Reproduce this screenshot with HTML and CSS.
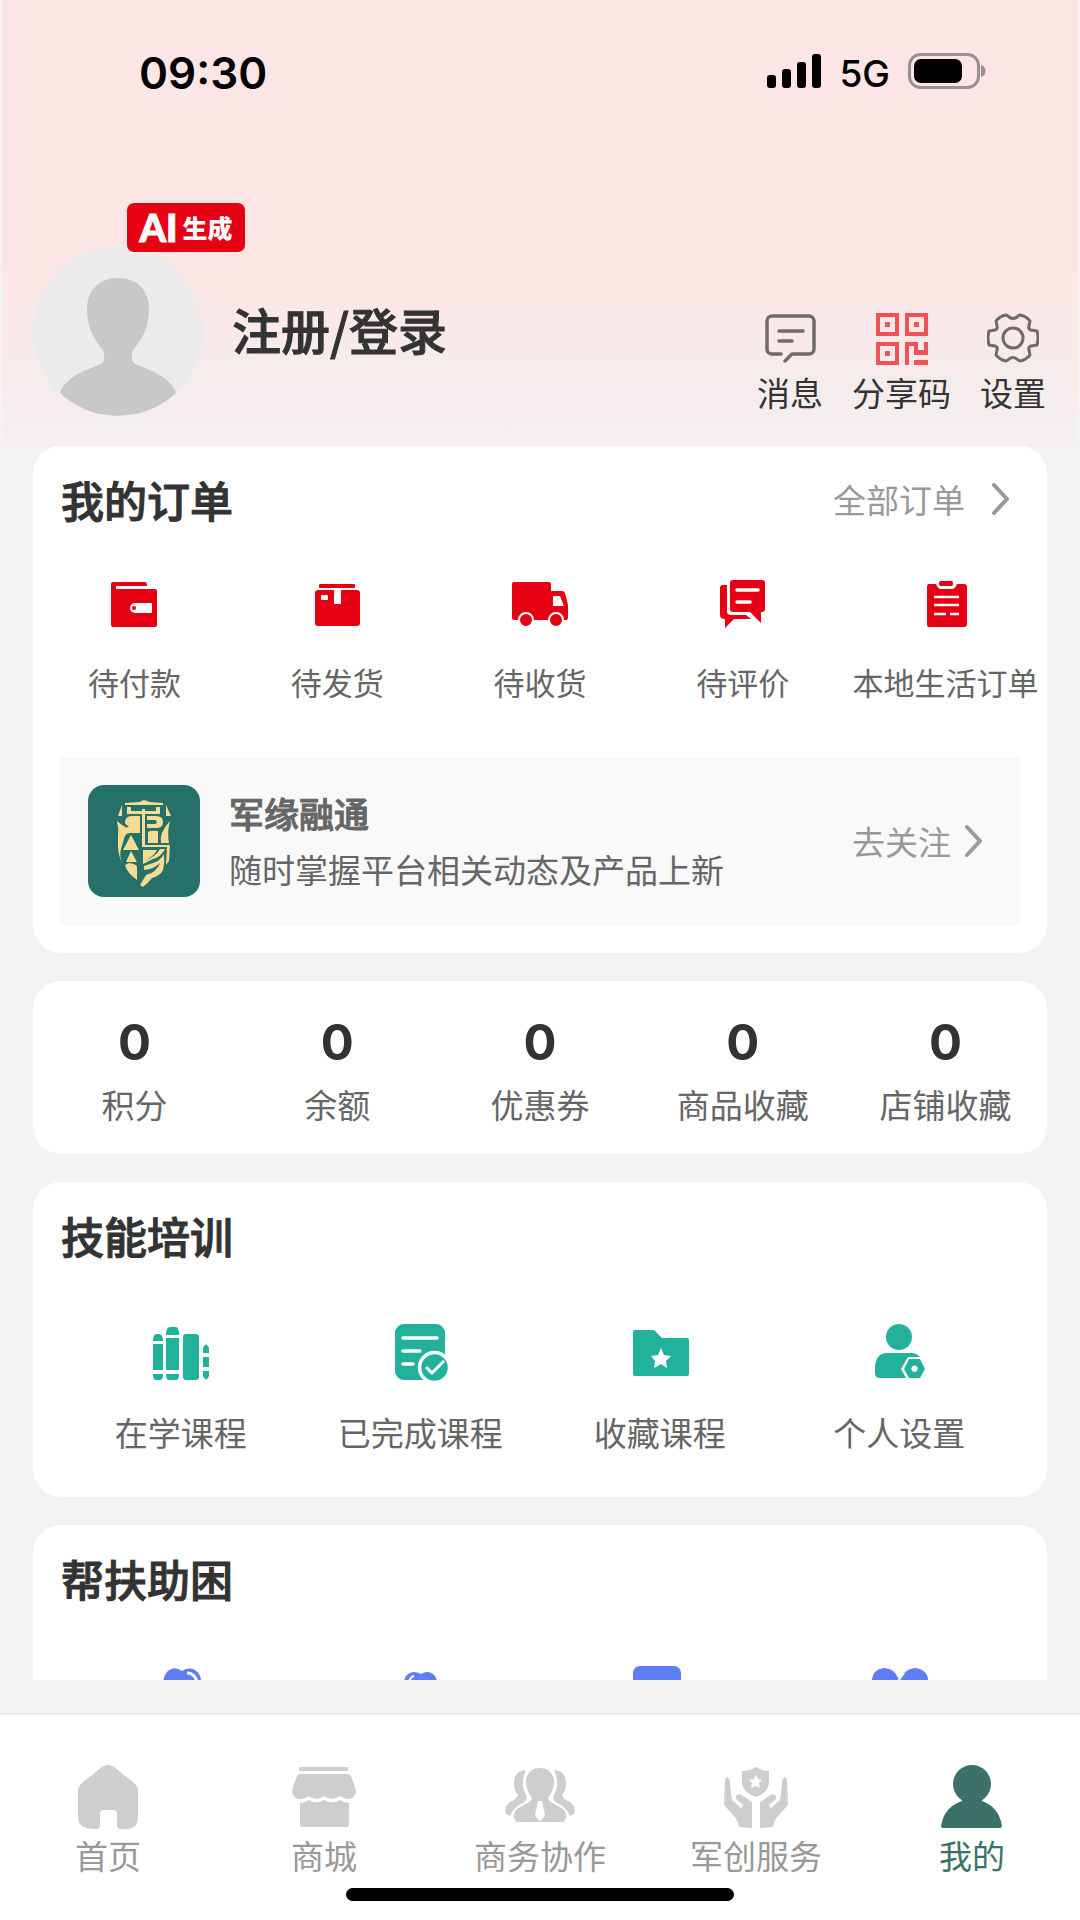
FILE: index.html
```html
<!DOCTYPE html>
<html lang="zh-CN">
<head>
<meta charset="utf-8">
<meta name="viewport" content="width=device-width, initial-scale=1">
<title>我的</title>
<link rel="stylesheet" href="styles.css">
</head>
<body>
<div class="app">
  <header class="top">
    <div class="status">
      <time class="clock">09:30</time>
      <div class="signals">
        <svg class="bars" viewBox="0 0 54 34" aria-hidden="true"><rect x="0" y="21" width="9" height="13" rx="3"/><rect x="15" y="15" width="9" height="19" rx="3"/><rect x="30" y="8" width="9" height="26" rx="3"/><rect x="45" y="0" width="9" height="34" rx="3"/></svg>
        <span class="network">5G</span>
        <svg class="battery" viewBox="0 0 78 36" aria-hidden="true"><rect x="1.500" y="1.500" width="69" height="33" rx="11" fill="none" stroke="#9c8f90" stroke-width="3"/><rect x="6" y="6" width="48" height="24" rx="7"/><path d="M73 12c6 1 6 11 0 12z" fill="#9c8f90"/></svg>
      </div>
    </div>
    <div class="profile">
      <div class="portrait">
        <svg class="avatar" viewBox="0 0 170 170" role="img" aria-label="头像"><circle cx="85" cy="85" r="85" fill="#eaebea"/><path d="M85 32c19 0 31 12 31 32 0 19-9 32-16 40-2 5-2 11 2 14 18 7 36 14 41 29a85 85 0 0 1-116 0c5-15 23-22 41-29 4-3 4-9 2-14-7-8-16-21-16-40 0-20 12-32 31-32z" fill="#c8c8c8"/></svg>
        <span class="ai-badge"><b>AI</b>生成</span>
      </div>
      <a class="login" href="#login">注册/登录</a>
      <nav class="actions" aria-label="快捷操作">
        <a class="action" href="#messages">
          <svg viewBox="0 0 52 52" fill="none" stroke="#706b6b" stroke-width="3.500" stroke-linecap="round" stroke-linejoin="round"><path d="M17 41H8a5 5 0 0 1-5-5V8a5 5 0 0 1 5-5h37a5 5 0 0 1 5 5v28a5 5 0 0 1-5 5H28l-7 7M15 18h24M15 28h13"/></svg>
          消息
        </a>
        <a class="action" href="#share">
          <svg viewBox="0 0 52 52" fill="#ef5358"><path fill-rule="evenodd" d="M0 0h23v23H0zM4 4v15h15V4zM9 9h5v5H9zM29 0h23v23H29zM33 4v15h15V4zM38 9h5v5h-5zM0 29h23v23H0zM4 33v15h15V33zM9 38h5v5H9z"/><path d="M29 29h13v8h6v-8h4v13H38v-9h-5v19h-4zM38 47h14v5H38z"/></svg>
          分享码
        </a>
        <a class="action" href="#settings">
          <svg viewBox="0 0 52 52" fill="none" stroke="#706b6b" stroke-width="3" stroke-linejoin="round"><path d="M50 18q2 7 0 14l-6 1q-3 1-2 4l1 5q-4 5-10 6-1 0-3-2-4-3-8 0-2 2-3 2-6-1-10-6l1-5q1-3-2-4l-6-1q-2-7 0-14l6-1q3-1 2-4l-1-5q4-5 10-6 1 0 3 2 4 3 8 0 2-2 3-2 6 1 10 6l-1 5q-1 3 2 4z"/><circle cx="26" cy="25" r="10"/></svg>
          设置
        </a>
      </nav>
    </div>
  </header>

  <main class="content">
    <section class="card">
      <div class="card-head">
        <h2>我的订单</h2>
        <a class="more wide" href="#orders">全部订单
          <svg viewBox="0 0 18 34"><path d="M2 3l13 14L2 31"/></svg>
        </a>
      </div>
      <ul class="orders">
        <li><a href="#pay">
          <svg viewBox="0 0 60 60"><path d="M9 8h32q2 0 2 4H12v3h39q2 0 2 2v34q0 2-2 2H9q-2 0-2-2V10q0-2 2-2z"/><path d="M31 29h17v10H31a5 5 0 0 1 0-10z" fill="#fff"/><circle cx="30" cy="34" r="2"/></svg>
          待付款</a></li>
        <li><a href="#ship">
          <svg viewBox="0 0 60 60"><rect x="12" y="10" width="36" height="4" rx="1"/><path d="M11 16h16v14h7V16h16q3 0 3 3v30q0 3-3 3H11q-3 0-3-3V19q0-3 3-3z"/><rect x="14" y="21" width="7" height="5" rx="1" fill="#fff"/></svg>
          待发货</a></li>
        <li><a href="#receive">
          <svg viewBox="0 0 60 60"><path d="M4 8h35q2 0 2 2v7h11q2 0 3 2l3 12v13q0 2-2 2H4q-2 0-2-2V10q0-2 2-2z"/><path d="M43 22h7l4 10H43z" fill="#fff"/><g stroke="#fff" stroke-width="2"><circle cx="16" cy="46" r="7"/><circle cx="46" cy="46" r="7"/></g></svg>
          待收货</a></li>
        <li><a href="#review">
          <svg viewBox="0 0 60 60"><path d="M10 11h4v26q0 4 4 4h15l5 4H21l-9 9v-9q-5 0-5-4V14q0-3 3-3z"/><path d="M20 6h29q3 0 3 3v26q0 3-3 3h-1v11L37 38H20q-3 0-3-3V9q0-3 3-3z"/><path d="M24 16h21M24 28h13" stroke="#fff" stroke-width="3.500" stroke-linecap="round"/></svg>
          待评价</a></li>
        <li><a href="#local">
          <svg viewBox="0 0 60 60"><path d="M13 10h7q2 5 5 5h11q3 0 5-5h7q3 0 3 3v37q0 3-3 3H13q-2 0-2-3V13q0-3 2-3z"/><rect x="23" y="7" width="14" height="5" rx="2"/><path d="M18 23h25M18 31h25M18 40h12M34 40h9" stroke="#fff" stroke-width="2.600"/></svg>
          本地生活订单</a></li>
      </ul>
      <div class="promo">
        <svg class="brand" viewBox="0 0 112 112" role="img" aria-label="军缘融通">
          <rect width="112" height="112" rx="16" fill="#26706a"/>
          <g fill="#f6dc92"><path d="M37 18l14-1 5-2 6 2 13 1v2H37zM34 20v11h-4zM78 20l5 11h-5zM39 22h4v4h25v-4h4v7H39z"/><path d="M52 31H43q-6 1-6 6 0 3 4 4-3 2-3 3l4 2h10z"/><path fill-rule="evenodd" d="M59 31h9q7 0 7 6t-7 6h-9zM59 35v4h8q4-2 0-4z"/><path d="M54 24h3v36h-3z"/><path d="M29 36q8 7 17 10h6v2H42q-5 0-6 6l-3 10q-2 6 1 14-5-10-4-26 1-8-1-16zM60 47q3-2 10-1v12H60zM82 36q-11 12-9 22h8q-2-11 1-22z"/><path d="M43 50l8 15H35zM43 66l6 11H38zM37 80l4-2q8 1 8 4v13q-10-7-12-15z"/><path d="M54 60h28l-1 16-3 4 1-18H54z"/><path d="M55 65h14q-3 7-14 11zM72 64h5q-4 8-12 10l-10 5v-3q13-4 17-12zM76 69q-4 7-11 9l-9 3v4q10-1 16-7-3 9-14 12l-6 10 3 2q5-4 9-9 8-2 11-8 2-8 1-16z"/></g>
        </svg>
        <div class="promo-text">
          <h3>军缘融通</h3>
          <p>随时掌握平台相关动态及产品上新</p>
        </div>
        <a class="more" href="#follow">去关注
          <svg viewBox="0 0 18 34"><path d="M2 3l13 14L2 31"/></svg>
        </a>
      </div>
    </section>

    <section class="card">
      <ul class="stats">
        <li><a href="#points"><strong>0</strong>积分</a></li>
        <li><a href="#balance"><strong>0</strong>余额</a></li>
        <li><a href="#coupons"><strong>0</strong>优惠券</a></li>
        <li><a href="#goods"><strong>0</strong>商品收藏</a></li>
        <li><a href="#shops"><strong>0</strong>店铺收藏</a></li>
      </ul>
    </section>

    <section class="card">
      <div class="card-head"><h2>技能培训</h2></div>
      <ul class="tiles green">
        <li><a href="#learning">
          <svg viewBox="0 0 64 64"><path d="M4 21q0-7 4-7h2q4 0 4 7zM4 24h10v26H4zM4 54h10q0 6-3 6H7q-3 0-3-6zM17 15q0-8 4-8h6q3 0 3 8zM17 18h13v32H17zM17 54h13q0 6-3 6h-7q-3 0-3-6zM54 33v-5q3-7 6 0v5zM54 37h6v10h-6zM54 51h6v5q-3 7-6 0z"/><rect x="34" y="14" width="16" height="46" rx="3"/></svg>
          在学课程</a></li>
        <li><a href="#finished">
          <svg viewBox="0 0 64 64"><rect x="7" y="4" width="50" height="56" rx="9"/><path d="M15 18h34M15 31h17M15 44h10" stroke="#fff" stroke-width="3.500" stroke-linecap="round"/><circle cx="46.500" cy="47.500" r="15" stroke="#fff" stroke-width="3.500"/><path d="M38 47l6 6 12-12" fill="none" stroke="#fff" stroke-width="3"/></svg>
          已完成课程</a></li>
        <li><a href="#saved">
          <svg viewBox="0 0 64 64"><path d="M7 10h18q2 0 3 2l6 6h25q2 0 2 2v34q0 2-2 2H7q-2 0-2-2V12q0-2 2-2z"/><path d="M33 28l3 7 7 1-5 5 1 7-6-4-7 4 1-7-4-5 7-1z" fill="#fff"/></svg>
          收藏课程</a></li>
        <li><a href="#personal">
          <svg viewBox="0 0 64 64"><circle cx="32" cy="17" r="13"/><path d="M20 33h24q6 0 9 4H41l-7 12 5 9H13q-5 0-5-5v-6q1-14 12-14z"/><path fill-rule="evenodd" d="M42 39h11l5 10-5 9H42l-5-9zM47.500 45.500a3.200 3.200 0 1 0 .1 0z"/></svg>
          个人设置</a></li>
      </ul>
    </section>

    <section class="card">
      <div class="card-head"><h2>帮扶助困</h2></div>
      <ul class="tiles blue">
        <li><a href="#care" aria-label="爱心帮扶"><svg viewBox="0 0 64 64"><path d="M33 8q10-6 17 3 6 10-5 20L33 42 20 30Q10 19 18 9q7-7 15-1z"/><path d="M38 10q8 0 10 9" fill="none" stroke="#fff" stroke-width="3"/></svg></a></li>
        <li><a href="#support" aria-label="困难援助"><svg viewBox="0 0 64 64"><path d="M33 11q8-5 14 2 5 8-4 17L33 39 22 30q-9-9-4-17 6-7 15-2z"/><path d="M21 19q1-5 5-6" fill="none" stroke="#fff" stroke-width="2"/></svg></a></li>
        <li><a href="#policy" aria-label="帮扶政策"><svg viewBox="0 0 64 64"><rect x="5" y="3" width="48" height="56" rx="7"/></svg></a></li>
        <li><a href="#donate" aria-label="公益捐助"><svg viewBox="0 0 64 64"><path d="M33 15Q40 5 48 5q15 2 13 17-2 14-28 35Q7 36 5 22 3 7 17 5q10 0 14 10z"/><path d="M37 10l-6 8" stroke="#fff" stroke-width="2"/></svg></a></li>
      </ul>
    </section>
  </main>

  <footer class="bottom">
    <nav class="tabs" aria-label="主导航">
      <a href="#home"><svg viewBox="0 0 72 72"><path d="M30 6q6-4 12 0l20 16q4 3 4 8v26q0 12-12 12h-5q-4 0-4-4V53q0-4-4-4h-9q-4 0-4 4v11q0 4-4 4h-2Q6 68 6 56V30q0-5 4-8z"/></svg>首页</a>
      <a href="#mall"><svg viewBox="0 0 72 72"><rect x="11" y="6" width="49" height="4" rx="1"/><path d="M12 13h48q2 0 3 2l5 14q0 9-8 9-4 0-8-3-8 6-16 0-7 6-15 0-4 3-8 3-9 0-9-9l5-14q1-2 3-2z"/><path d="M12 42q5 0 9-3 7 5 15 0 8 5 16 0 4 3 9 3v22q0 2-2 2H14q-2 0-2-2z"/></svg>商城</a>
      <a href="#business"><svg viewBox="0 0 72 72"><path d="M22 9q-12 0-12 14 0 6 4 11-1 4-8 7-6 5-4 12l4 2q3-8 11-12 6-3 6-7-8-13-1-27zM50 9q12 0 12 14 0 6-4 11 1 4 8 7 6 5 4 12l-4 2q-3-8-11-12-6-3-6-7 8-13 1-27z"/><path d="M36 7c9 0 14 6 14 14 0 7-3 11-6 16 0 4 8 6 12 9 5 3 6 6 6 9q0 6-5 6H15q-5 0-5-6c0-3 1-6 6-9 4-3 12-5 12-9-3-5-6-9-6-16 0-8 5-14 14-14z"/><path d="M34 40h4l3 15-5 5-5-5z" fill="#fff"/></svg>商务协作</a>
      <a href="#service"><svg viewBox="0 0 72 72"><path d="M36 6q6 4 13 4v13q-2 9-13 13-12-4-14-13V10q8 0 14-4z"/><path d="M36 14l2 4 4 1-3 3 1 5-4-2-5 2 1-5-3-3 5-1z" fill="#fff"/><path id="hand" d="M7 16q3 0 3 8l2 15 9 8q3-1 1-4l-6-5q-1-5 4-5l12 8v26l-13-1q-1-7-6-12L5 45 4 42l1-21q0-5 2-5z"/><use href="#hand" transform="matrix(-1 0 0 1 72 0)"/></svg>军创服务</a>
      <a class="current" href="#mine" aria-current="page"><svg viewBox="0 0 72 72"><circle cx="36" cy="23" r="19"/><path d="M26 36h20v4q17 6 20 25 0 2-2 2H7q-2 0-2-2 3-19 21-25z"/></svg>我的</a>
    </nav>
    <div class="home-bar"></div>
  </footer>
</div>
</body>
</html>
```
FILE: styles.css
```css
* { box-sizing: border-box; }

body {
  margin: 0;
  background: #f2f3f5;
  color: #333;
  font-family: "Noto Sans CJK SC", sans-serif;
  font-size: 33px;
  line-height: 44px;
}

a { color: inherit; text-decoration: none; }
ul { list-style: none; margin: 0; padding: 0; }
h2, h3, p { margin: 0; }
svg { display: block; flex: none; }

.app {
  display: flex;
  flex-direction: column;
  height: 100vh;
}

.top {
  flex: none;
  padding: 50px 34px 30px;
  background: linear-gradient(#fbe6e5 0, #fbe6e5 60%, #f4eff0 100%);
  border: solid #f2f3f5;
  border-width: 0 2px;
}

.status {
  display: flex;
  justify-content: space-between;
  align-items: center;
  padding: 0 58px 0 103px;
  height: 42px;
  color: #000;
  font-family: Inter, sans-serif;
}
.clock { padding-top: 4px; font-size: 44px; font-weight: 600; }
.signals { display: flex; align-items: center; gap: 18px; }
.bars { width: 54px; height: 34px; }
.network { padding-top: 6px; font-size: 37px; font-weight: 500; }
.battery { width: 78px; height: 36px; }

.profile {
  display: flex;
  align-items: center;
  margin-top: 154px;
}
.portrait {
  position: relative;
  flex: none;
  margin-left: -3px;
}
.avatar { width: 170px; height: 170px; }
.ai-badge {
  position: absolute;
  left: 94px;
  top: -43px;
  display: flex;
  align-items: center;
  justify-content: center;
  gap: 5px;
  width: 118px;
  height: 49px;
  padding-bottom: 2px;
  border-radius: 7px;
  background: #e60014;
  color: #fff;
  font-size: 25px;
  font-weight: 900;
  line-height: 40px;
}
.ai-badge b {
  font-family: Lato, sans-serif;
  font-size: 38px;
  font-weight: 900;
  -webkit-text-stroke: 1px #fff;
}

.login {
  margin-left: 29px;
  padding-bottom: 4px;
  font-size: 49px;
  font-weight: 500;
  line-height: 60px;
  -webkit-text-stroke: 1px currentColor;
}
.actions {
  display: flex;
  align-self: flex-end;
  gap: 29px;
  margin-left: auto;
  margin-right: -2px;
  padding-bottom: 2px;
}
.action {
  display: flex;
  flex-direction: column;
  align-items: center;
  gap: 5px;
}
.action svg { width: 52px; height: 52px; }

.content {
  flex: 1;
  min-height: 0;
  overflow: hidden;
  display: flex;
  flex-direction: column;
  gap: 28px;
  margin-bottom: 33px;
  padding: 0 33px;
}
.card {
  flex: none;
  padding-top: 22px;
  border-radius: 28px;
  background: #fff;
}
.card-head {
  display: flex;
  justify-content: space-between;
  align-items: center;
  padding: 0 28px;
}
.card-head h2 {
  font-size: 43px;
  font-weight: 500;
  line-height: 62px;
  -webkit-text-stroke: 1px currentColor;
}

.more {
  display: flex;
  align-items: center;
  gap: 14px;
  margin-left: auto;
  padding-right: 9px;
  color: #999;
}
.more.wide { gap: 27px; }
.more svg {
  width: 18px;
  height: 34px;
  fill: none;
  stroke: #999;
  stroke-width: 4;
  stroke-linecap: round;
  stroke-linejoin: round;
}

.orders, .stats, .tiles { display: grid; color: #666; }
.orders, .stats { grid-template-columns: repeat(5, 1fr); }
.tiles { grid-template-columns: repeat(4, 1fr); }
.orders a, .stats a, .tiles a {
  display: flex;
  flex-direction: column;
  align-items: center;
  gap: 26px;
  white-space: nowrap;
}
.orders { margin-top: 44px; font-size: 31px; }
.orders svg { width: 60px; height: 60px; fill: #e60014; }

.promo {
  display: flex;
  align-items: center;
  margin: 53px 27px 0;
  padding: 28px;
  background: #f9f9f9;
  color: #666;
}
.card:has(.promo) { padding-bottom: 28px; }
.brand { width: 112px; height: 112px; }
.promo-text { margin-left: 29px; }
.promo-text h3 {
  font-size: 35px;
  font-weight: 500;
  line-height: 56px;
  -webkit-text-stroke: 1px currentColor;
}
.promo-text p { line-height: 56px; }

.stats { padding: 10px 0 28px; }
.stats a { gap: 9px; }
.stats strong {
  color: #333;
  font-family: Inter, sans-serif;
  font-size: 49px;
  font-weight: 700;
  line-height: 60px;
}

.tiles { margin-top: 54px; padding: 0 28px 43px; }
.tiles svg { width: 64px; height: 64px; }
.green svg { fill: #22b29c; }
.blue svg { fill: #5f7ef6; }

.bottom {
  flex: none;
  padding: 46px 0 19px;
  border-top: 2px solid #e9eaea;
  background: #fff;
}
.tabs { display: grid; grid-template-columns: repeat(5, 1fr); }
.tabs a {
  display: flex;
  flex-direction: column;
  align-items: center;
  color: #999;
}
.tabs svg { width: 72px; height: 72px; fill: #cecece; }
.tabs .current { color: #3c7169; }
.tabs .current svg { fill: #3c7169; }
.home-bar {
  width: 36%;
  height: 13px;
  margin: 11px auto 0;
  border-radius: 7px;
  background: #000;
}
```
